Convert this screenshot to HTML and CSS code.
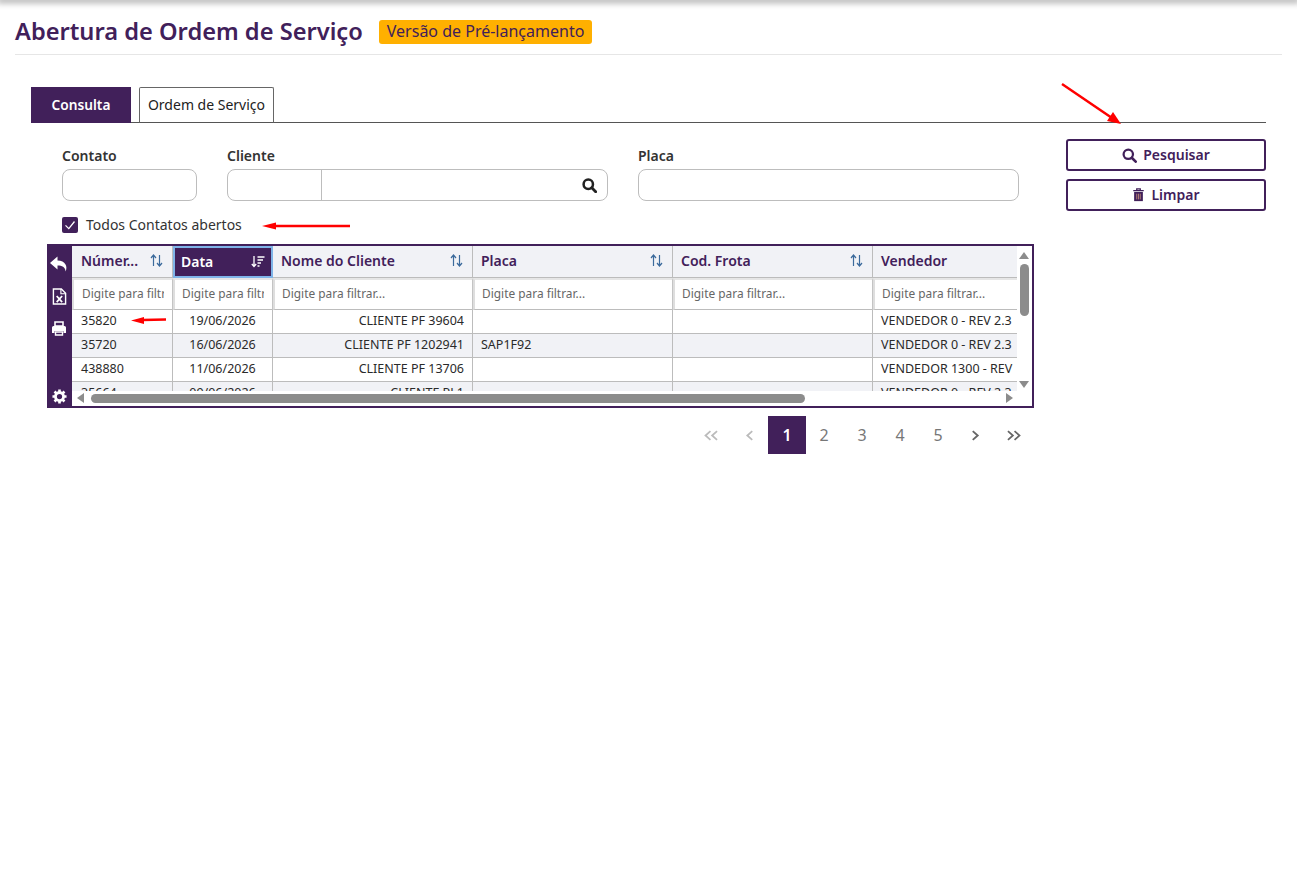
FILE: index.html
```html
<!DOCTYPE html>
<html lang="pt-BR">
<head>
<meta charset="utf-8">
<title>Abertura de Ordem de Serviço</title>
<link rel="stylesheet" href="styles.css">
</head>
<body>
<div class="topshadow"></div>
<header class="pagehead">
  <h1>Abertura de Ordem de Serviço</h1>
  <span class="badge">Versão de Pré-lançamento</span>
</header>
<main class="content">
  <nav class="tabs">
    <a class="tab active">Consulta</a>
    <a class="tab">Ordem de Serviço</a>
  </nav>
  <div class="body-row">
    <section class="left">
      <div class="fields">
        <div class="field f-contato"><label>Contato</label><div class="box"></div></div>
        <div class="field f-cliente"><label>Cliente</label>
          <div class="box split"><span class="code"></span><span class="name"></span>
            <svg class="lens" viewBox="0 0 16 16" width="15" height="15"><circle cx="6.7" cy="6.7" r="5" fill="none" stroke="#222" stroke-width="2.7"/><path d="M10.4 10.4 14.6 14.6" stroke="#222" stroke-width="3" stroke-linecap="round"/></svg>
          </div>
        </div>
        <div class="field f-placa"><label>Placa</label><div class="box"></div></div>
      </div>
      <div class="check">
        <span class="checkbox"><svg viewBox="0 0 16 16" width="16" height="16"><path d="M3.500 8.400 6.800 11.600 12.500 4.500" fill="none" stroke="#fff" stroke-width="1.300"/></svg></span>
        <span class="check-text">Todos Contatos abertos</span>
      </div>
      <div class="datagrid">
        <aside class="tools">
          <svg viewBox="0 0 18 16" width="18" height="16"><path d="M7.500 .5 0 7l7.500 6.500V9.600c4.800 0 7.300 1.200 8.200 5.900C17.800 10.500 15.500 4.800 7.500 4.600z" fill="#fff"/></svg>
          <svg viewBox="0 0 16 18" width="15" height="17"><path d="M1.500 1h8.500l4.500 4.500V17h-13z" fill="none" stroke="#fff" stroke-width="1.500"/><path d="M9.500 1v5h5" fill="none" stroke="#fff" stroke-width="1.200"/><path d="M5 8.500 10.800 15M10.800 8.500 5 15" stroke="#fff" stroke-width="1.900"/></svg>
          <svg viewBox="0 0 16 15" width="16" height="15"><path d="M4 1h8v4H4z" fill="none" stroke="#fff" stroke-width="1.600"/><path d="M1 6.500q0-1.500 1.500-1.500h11q1.500 0 1.500 1.500V12h-2.500v-2h-9v2H1z" fill="#fff"/><path d="M4.500 11h7v3h-7z" fill="none" stroke="#fff" stroke-width="1.400"/></svg>
          <svg class="gear" viewBox="0 0 16 16" width="15" height="15"><circle cx="8" cy="8" r="4.300" fill="none" stroke="#fff" stroke-width="3"/><path d="M8 .5v3M8 12.500v3M.5 8h3M12.500 8h3M2.700 2.700l2.100 2.100M11.200 11.200l2.100 2.100M13.300 2.700l-2.100 2.100M4.800 11.200l-2.100 2.100" stroke="#fff" stroke-width="2.800"/></svg>
        </aside>
        <div class="gridmain">
          <div class="viewport">
            <div class="row head">
              <div class="th"><span>Númer...</span><svg class="sort" viewBox="0 0 13 13" width="13" height="13"><path d="M3.500 12V1.500M1 4l2.500-3L6 4M9.500 1v10.500M7 9l2.500 3L12 9" fill="none" stroke="#3b6a9c" stroke-width="1.200"/></svg></div>
              <div class="th sorted"><span>Data</span><svg viewBox="0 0 14 13" width="14" height="13"><path d="M3 1v10.500M.8 9l2.200 2.500L5.200 9" fill="none" stroke="#fff" stroke-width="1.300"/><path d="M6.500 2h7M6.500 5h5.500M6.500 8h3.500M6.500 11h2" stroke="#fff" stroke-width="1.300"/></svg></div>
              <div class="th"><span>Nome do Cliente</span><svg class="sort" viewBox="0 0 13 13" width="13" height="13"><path d="M3.500 12V1.500M1 4l2.500-3L6 4M9.500 1v10.500M7 9l2.500 3L12 9" fill="none" stroke="#3b6a9c" stroke-width="1.200"/></svg></div>
              <div class="th"><span>Placa</span><svg class="sort" viewBox="0 0 13 13" width="13" height="13"><path d="M3.500 12V1.500M1 4l2.500-3L6 4M9.500 1v10.500M7 9l2.500 3L12 9" fill="none" stroke="#3b6a9c" stroke-width="1.200"/></svg></div>
              <div class="th"><span>Cod. Frota</span><svg class="sort" viewBox="0 0 13 13" width="13" height="13"><path d="M3.500 12V1.500M1 4l2.500-3L6 4M9.500 1v10.500M7 9l2.500 3L12 9" fill="none" stroke="#3b6a9c" stroke-width="1.200"/></svg></div>
              <div class="th last"><span>Vendedor</span></div>
            </div>
            <div class="row filters">
              <div class="fc"><input placeholder="Digite para filtrar..."></div>
              <div class="fc"><input placeholder="Digite para filtrar..."></div>
              <div class="fc"><input placeholder="Digite para filtrar..."></div>
              <div class="fc"><input placeholder="Digite para filtrar..."></div>
              <div class="fc"><input placeholder="Digite para filtrar..."></div>
              <div class="fc last"><input placeholder="Digite para filtrar..."></div>
            </div>
            <div class="row data"><div class="td">35820</div><div class="td c">19/06/2026</div><div class="td r">CLIENTE PF 39604</div><div class="td"></div><div class="td"></div><div class="td last">VENDEDOR 0 - REV 2.3</div></div>
            <div class="row data alt"><div class="td">35720</div><div class="td c">16/06/2026</div><div class="td r">CLIENTE PF 1202941</div><div class="td">SAP1F92</div><div class="td"></div><div class="td last">VENDEDOR 0 - REV 2.3</div></div>
            <div class="row data"><div class="td">438880</div><div class="td c">11/06/2026</div><div class="td r">CLIENTE PF 13706</div><div class="td"></div><div class="td"></div><div class="td last">VENDEDOR 1300 - REV</div></div>
            <div class="row data alt"><div class="td">35664</div><div class="td c">09/06/2026</div><div class="td r">CLIENTE PJ 1</div><div class="td"></div><div class="td"></div><div class="td last">VENDEDOR 0 - REV 2.3</div></div>
          </div>
          <div class="vbar"><i class="up"></i><b></b><i class="down"></i></div>
          <div class="hbar"><i class="lt"></i><b></b><i class="rt"></i></div>
        </div>
      </div>
      <div class="pager">
        <a class="pg muted"><svg viewBox="0 0 14 10" width="16" height="11"><path d="M6.500 1 2 5l4.500 4M12.500 1 8 5l4.500 4" fill="none" stroke="#bbb" stroke-width="1.600"/></svg></a>
        <a class="pg muted"><svg viewBox="0 0 8 10" width="9" height="11"><path d="M6.500 1 2 5l4.500 4" fill="none" stroke="#bbb" stroke-width="1.600"/></svg></a>
        <a class="pg current">1</a><a class="pg num">2</a><a class="pg num">3</a><a class="pg num">4</a><a class="pg num">5</a>
        <a class="pg arrow"><svg viewBox="0 0 8 10" width="9" height="11"><path d="M1.500 1 6 5 1.500 9" fill="none" stroke="#666" stroke-width="1.700"/></svg></a>
        <a class="pg arrow"><svg viewBox="0 0 14 10" width="16" height="11"><path d="M1.500 1 6 5 1.500 9M7.500 1 12 5 7.500 9" fill="none" stroke="#666" stroke-width="1.600"/></svg></a>
      </div>
    </section>
    <aside class="actions">
      <button class="btn"><svg viewBox="0 0 16 16" width="15" height="15"><circle cx="6.700" cy="6.700" r="5" fill="none" stroke="#41205a" stroke-width="2.400"/><path d="M10.400 10.400 14.600 14.600" stroke="#41205a" stroke-width="2.800" stroke-linecap="round"/></svg><span>Pesquisar</span></button>
      <button class="btn"><svg viewBox="0 0 14 16" width="13" height="14"><path d="M1 3h12M5 2.500V1h4v1.500" fill="none" stroke="#41205a" stroke-width="1.500"/><path d="M2 4.500h10V15H2z" fill="#41205a"/><path d="M5 6.500V13M7 6.500V13M9 6.500V13" stroke="#e0a080" stroke-width=".8"/></svg><span>Limpar</span></button>
    </aside>
  </div>
</main>
<svg class="annot" width="1297" height="889" viewBox="0 0 1297 889">
  <g stroke="#f00" fill="#f00">
    <path d="M1062 84 1112 118" stroke-width="2.500"/><path d="M1121 124 1107 121 1113 112z" stroke="none"/>
    <path d="M275 226H350" stroke-width="2.500"/><path d="M262 226 276 222.500V229.500z" stroke="none"/>
    <path d="M142 320 166 319.500" stroke-width="2.500"/><path d="M131 320.500 144 317V324z" stroke="none"/>
  </g>
</svg>
</body>
</html>
```
FILE: styles.css
```css
* { box-sizing: border-box; }
html, body { margin: 0; padding: 0; background: #fff; }
body { font-family: "Noto Sans", Lato, sans-serif; color: #222; font-size: 14px; height: 889px; overflow: hidden; position: relative; }
.topshadow { height: 0; box-shadow: 0 0 6px 3px rgba(0,0,0,.32); }
.pagehead { margin: 0 15px; box-sizing: content-box; height: 39px; padding-top: 15px; border-bottom: 1px solid #e6e6e6; display: flex; align-items: flex-start; }
h1 { margin: 0; font-size: 23.650px; line-height: 32px; font-weight: 600; color: #41205a; }
.badge { margin: 5px 0 0 16px; height: 24px; line-height: 23px; padding: 0 8px; background: #ffb000; color: #41205a; border-radius: 3px; font-size: 16px; white-space: nowrap; }
.content { padding: 32px 31px 0; }
.tabs { display: flex; gap: 8px; height: 36px; border-bottom: 1px solid #555; }
.tab { height: 36px; display: flex; align-items: center; justify-content: center; font-size: 14px; padding-bottom: 2px; }
.tab.active { width: 100px; background: #41205a; color: #fff; font-weight: 600; font-size: 13.700px; }
.tab:not(.active) { width: 135px; border: 1px solid #666; border-bottom: 1px solid #555; background: #fff; border-radius: 2px 2px 0 0; color: #222; }
.body-row { display: flex; }
.left { width: 1003px; padding-left: 16px; }
.actions { margin-left: 32px; width: 200px; padding-top: 16px; display: flex; flex-direction: column; gap: 8px; }
.btn { height: 32px; background: #fff; border: 2px solid #41205a; border-radius: 3px; color: #41205a; font: 600 14px "Noto Sans", Lato, sans-serif; display: flex; align-items: center; justify-content: center; gap: 6px; padding: 0; }
.btn span { margin-top: -2px; }
.fields { display: flex; padding-left: 15px; gap: 30px; padding-top: 24px; }
.field label { display: block; height: 22px; line-height: 18px; font-weight: 600; font-size: 14px; color: #333; }
.f-contato { width: 135px; } .f-cliente { width: 381px; } .f-placa { width: 381px; }
.box { height: 32px; border: 1px solid #bdbdbd; border-radius: 8px; background: #fff; }
.split { display: flex; align-items: center; }
.code { width: 94px; height: 100%; border-right: 1px solid #bdbdbd; }
.name { flex: 1; }
.lens { margin-right: 10px; }
.check { display: flex; align-items: center; gap: 8px; margin: 16px 0 0 15px; height: 16px; font-size: 14px; color: #333; }
.check-text { margin-top: -2px; }
.checkbox { width: 16px; height: 16px; background: #41205a; border-radius: 2px; display: block; }
.checkbox svg { display: block; }
.datagrid { margin-top: 11px; width: 987px; height: 164px; border: 2px solid #41205a; display: flex; background: #fff; }
.tools { width: 23px; background: #41205a; display: flex; flex-direction: column; align-items: center; padding: 10px 3px 0 0; gap: 16px; flex: none; }
.tools svg { flex: none; }
.tools .gear { margin-top: auto; margin-bottom: 2px; }
.gridmain { flex: 1; position: relative; overflow: hidden; }
.viewport { width: 945px; height: 145px; overflow: hidden; }
.row { display: grid; grid-template-columns: 101px 100px 200px 200px 200px 144px; }
.head { height: 32px; background: #f1f2f6; }
.th { display: flex; align-items: center; justify-content: space-between; padding: 0 9px 2px 8px; border-right: 1px solid #bcbcbc; border-bottom: 1px solid #bcbcbc; font-weight: 600; color: #41205a; font-size: 14px; white-space: nowrap; }
.th:first-child { padding-left: 9px; }
.th.sorted { background: #41205a; color: #fff; border: 2px solid #7fb4e8; padding: 0 6px 2px 6px; }
.th.last, .fc.last, .td.last { border-right: 0; }
.filters { height: 32px; background: #fff; }
.fc { border: 2px solid #dedede; border-top-color: #e6e6e6; border-bottom: 1px solid #bcbcbc; border-right: 1px solid #c4c4c4; background: #fff; padding: 0 8px 0 7px; display: flex; min-width: 0; }
.fc:first-child { padding-left: 8px; }
.fc input { width: 100%; min-width: 0; border: 0; outline: 0; padding: 0 0 4px; background: transparent; font: 400 11.900px "Noto Sans", Lato, sans-serif; }
.fc input::placeholder { color: #666; opacity: 1; }
.data { height: 24px; background: #fff; font-size: 12.500px; color: #2a2a2a; }
.data.alt { background: #f1f2f6; }
.td { line-height: 21px; padding: 0 8px; border-right: 1px solid #bcbcbc; border-bottom: 1px solid #bcbcbc; white-space: nowrap; overflow: hidden; min-width: 0; }
.td:first-child { padding-left: 9px; }
.td.c { text-align: center; }
.td.r { text-align: right; }
.td.last { padding-right: 0; }
.vbar { position: absolute; right: 0; top: 0; width: 15px; bottom: 0; background: #fff; }
.vbar b { position: absolute; left: 3px; top: 18px; width: 9px; height: 52px; background: #8c8c8c; border-radius: 5px; }
.vbar .up { position: absolute; left: 2px; top: 6px; border: 5px solid transparent; border-top: 0; border-bottom: 7px solid #8c8c8c; }
.vbar .down { position: absolute; left: 2px; top: 135px; border: 5px solid transparent; border-bottom: 0; border-top: 7px solid #8c8c8c; }
.hbar { position: absolute; left: 0; bottom: 0; right: 15px; height: 15px; background: #fff; }
.hbar b { position: absolute; left: 19px; top: 3px; width: 714px; height: 9px; background: #8c8c8c; border-radius: 5px; }
.hbar .lt { position: absolute; left: 5px; top: 2px; border: 5px solid transparent; border-left: 0; border-right: 7px solid #8c8c8c; }
.hbar .rt { position: absolute; right: 4px; top: 2px; border: 5px solid transparent; border-right: 0; border-left: 7px solid #8c8c8c; }
.pager { display: flex; justify-content: flex-end; width: 987px; margin-top: 8px; height: 38px; }
.pg { width: 38px; height: 38px; display: flex; align-items: center; justify-content: center; color: #777; font-size: 16px; }
.pg.num { padding-right: 2px; }
.pg.arrow { padding-right: 3px; }
.pg.current { background: #41205a; color: #fff; font-weight: 600; }
.annot { position: absolute; left: 0; top: 0; pointer-events: none; }
```
